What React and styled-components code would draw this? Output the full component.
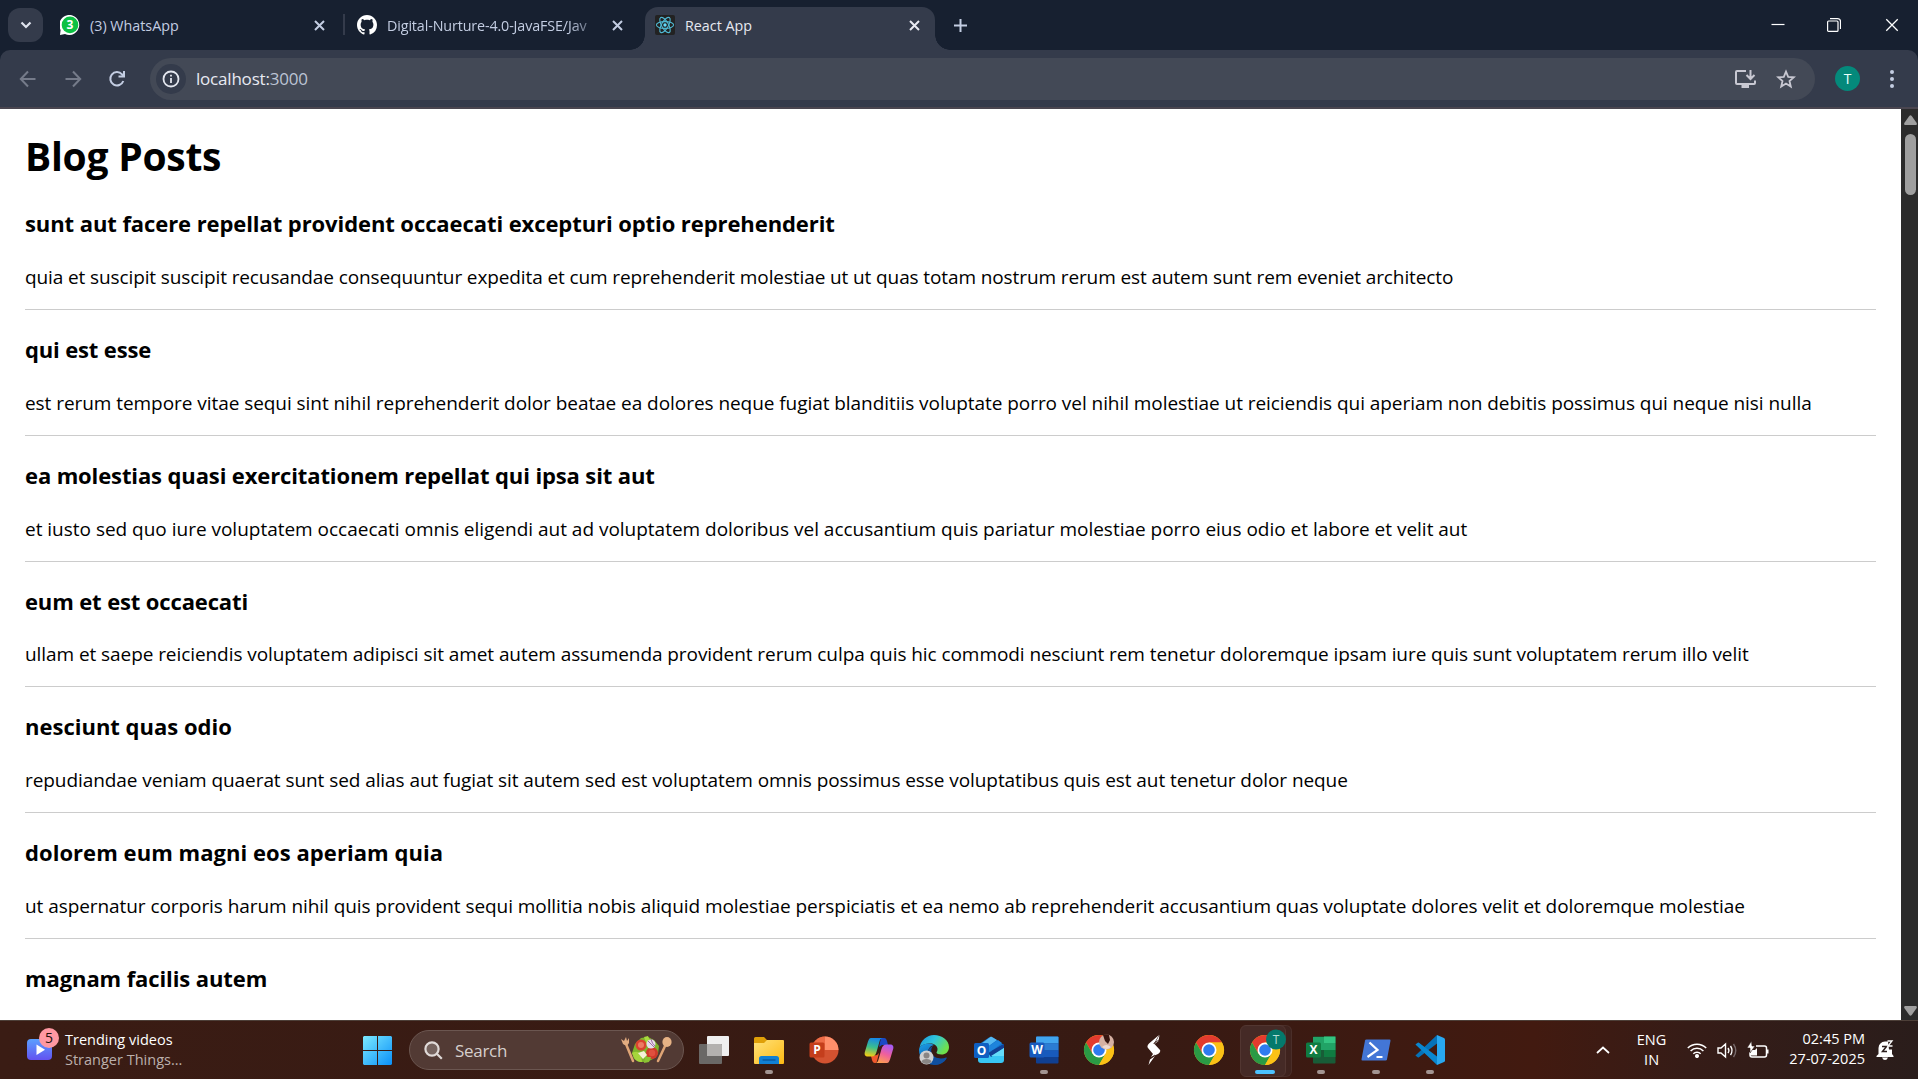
import React from "react";
import styled, { createGlobalStyle } from "styled-components";

const Global = createGlobalStyle`
  * { box-sizing: border-box; }
  html, body { margin: 0; overflow: hidden; background: #fff; }
  body { font-family: "Open Sans", "Noto Sans", sans-serif; }
`;

const Screen = styled.div`
  width: 1918px;
  height: 1079px;
  display: flex;
  flex-direction: column;
  overflow: hidden;
`;

/* ---------- browser chrome ---------- */
const TabStrip = styled.header`
  height: 50px;
  flex: none;
  display: flex;
  align-items: flex-end;
  background: #172030;
  padding-left: 8px;
  font-size: 14.3px;
`;
const TabSearch = styled.div`
  width: 35px;
  height: 34px;
  margin-bottom: 8px;
  border-radius: 12px;
  background: #343b4b;
  display: grid;
  place-items: center;
`;
const Tab = styled.div`
  position: relative;
  width: ${(p) => p.$w}px;
  height: 43px;
  margin-left: ${(p) => p.$ml || 0}px;
  padding: 0 ${(p) => p.$pr || 13}px 0 10px;
  display: flex;
  align-items: center;
  color: ${(p) => (p.$active ? "#e6e8f0" : "#c3cde2")};
  background: ${(p) => (p.$active ? "#343b4b" : "transparent")};
  border-radius: 13px 13px 0 0;
  svg { display: block; flex: none; margin-top: -7px; }
  &::before, &::after {
    content: "";
    display: ${(p) => (p.$active ? "block" : "none")};
    position: absolute;
    bottom: 0;
    width: 15px;
    height: 15px;
  }
  &::before { left: -15px; background: radial-gradient(circle at 0 0, transparent 14.5px, #343b4b 15px); }
  &::after { right: -15px; background: radial-gradient(circle at 100% 0, transparent 14.5px, #343b4b 15px); }
`;
const TabTitle = styled.span`
  flex: 1;
  min-width: 0;
  margin: -7px 14px 0 10px;
  white-space: nowrap;
  ${(p) => p.$fade && "letter-spacing: -0.12px; mask-image: linear-gradient(90deg, #000 86%, rgba(0, 0, 0, 0.2) 100%);"}
`;
const TabDivider = styled.i`
  width: 2px;
  height: 21px;
  margin: 0 0 15px 5px;
  background: #343b4b;
`;
const NewTab = styled.div`
  margin-left: 19px;
  height: 34px;
  margin-bottom: 8px;
  display: grid;
  place-items: center;
`;
const WindowButtons = styled.div`
  margin: 0 19px 0 auto;
  height: 50px;
  display: flex;
  align-items: center;
  gap: 43px;
  svg { display: block; margin-top: -1px; }
  svg:nth-child(2) { margin-left: -1px; margin-right: 1px; }
`;
const Toolbar = styled.div`
  background: #172030;
  flex: none;
`;
const ToolbarInner = styled.div`
  height: 59px;
  display: flex;
  align-items: center;
  background: #343b4b;
  border-bottom: 2px solid #4a4650;
  border-radius: 10px 10px 0 0;
  padding: 0 24px 0 18px;
`;
const NavIcons = styled.div`
  display: flex;
  gap: 24.5px;
  width: 132px;
  svg { display: block; }
`;
const Omnibox = styled.div`
  width: 1665px;
  height: 42px;
  border-radius: 21px;
  background: #434956;
  display: flex;
  align-items: center;
  padding: 0 19px 0 6px;
`;
const SiteInfo = styled.div`
  width: 30px;
  height: 30px;
  border-radius: 50%;
  background: #343b4b;
  display: grid;
  place-items: center;
  margin-right: 10px;
`;
const Url = styled.span`
  flex: 1;
  font-size: 17px;
  color: #e8eaf2;
  letter-spacing: -0.2px;
  em { font-style: normal; color: #bcc4d4; }
`;
const OmniActions = styled.div`
  display: flex;
  gap: 20px;
  svg { display: block; }
`;
const Avatar = styled.div`
  width: 25px;
  height: 25px;
  border-radius: 50%;
  background: #04897b;
  color: #e9fffb;
  font: 14px "Open Sans", sans-serif;
  display: grid;
  place-items: center;
  margin-left: 20px;
`;
const Dots = styled.div`
  margin: 0 0 0 auto;
  display: grid;
  gap: 3px;
  i { width: 4px; height: 4px; border-radius: 50%; background: #c3cde2; }
`;

/* ---------- page ---------- */
const Viewport = styled.div`
  height: 911px;
  flex: none;
  display: flex;
  overflow: hidden;
`;
const Page = styled.main`
  flex: 1;
  min-width: 0;
  padding: 19.5px 25px 0;
  color: #000;
  overflow: hidden;
`;
const Heading = styled.h1`
  margin: 0 0 1.7px;
  font-size: 39px;
  line-height: 54px;
  font-weight: 700;
  letter-spacing: -0.25px;
`;
const Post = styled.article`
  height: 125.8px;
  border-bottom: 1.25px solid #ccc;
  display: flex;
  flex-direction: column;
  white-space: nowrap;
`;
const PostTitle = styled.h3`
  margin: 23px 0 0;
  font-size: 22px;
  line-height: 32px;
  font-weight: 700;
  letter-spacing: ${(p) => p.$ls || 0}px;
`;
const PostBody = styled.p`
  margin: 24.8px 0 0;
  font-size: 19px;
  line-height: 27px;
  letter-spacing: ${(p) => p.$ls || 0}px;
`;
const Scrollbar = styled.div`
  width: 17px;
  background: #2b2b2b;
  display: flex;
  flex-direction: column;
  align-items: center;
  padding: 6px 0 4px 1px;
  svg { display: block; }
`;
const Thumb = styled.div`
  width: 11px;
  height: 61px;
  margin: 9px 0 auto;
  border-radius: 6px;
  background: #9f9f9f;
`;

/* ---------- taskbar ---------- */
const Taskbar = styled.footer`
  flex: 1;
  border-top: 1px solid #4d3f38;
  background: linear-gradient(90deg, #3a1c14 0%, #371a13 60%, #421a10 80%, #361c17 88%, #2a1d1b 100%);
  display: flex;
  align-items: center;
  color: #fff;
  font-size: 14.5px;
  line-height: 20px;
  white-space: nowrap;
`;
const Widget = styled.div`
  width: 363px;
  padding-left: 27px;
  display: flex;
  align-items: center;
  gap: 13px;
`;
const WidgetIcon = styled.div`
  position: relative;
  width: 25px;
  height: 21px;
  margin-top: -2px;
  svg { display: block; }
`;
const Badge = styled.b`
  position: absolute;
  left: 12px;
  top: -11px;
  width: 20px;
  height: 20px;
  border-radius: 50%;
  background: #ff98a2;
  color: #22100c;
  font-weight: 400;
  font-size: 14px;
  line-height: 20px;
  text-align: center;
`;
const Lines = styled.div`
  text-align: ${(p) => p.$align || "left"};
  div + div { color: ${(p) => p.$sub || "#fff"}; }
`;
const SearchBox = styled.div`
  width: 275px;
  height: 40px;
  margin: 0 2px 0 17px;
  border-radius: 20px;
  border: 1px solid #6b5650;
  background: #523a34;
  display: flex;
  align-items: center;
  padding: 0 11px 0 14px;
  font-size: 17px;
  color: #d6cfcc;
  svg { display: block; }
  span { flex: 1; margin: 2px 0 0 12px; letter-spacing: -0.3px; }
`;
const Slot = styled.div`
  position: relative;
  width: ${(p) => p.$w || 55}px;
  height: 50px;
  display: grid;
  place-items: center;
  svg { display: block; position: relative; }
  &::before {
    content: "";
    display: ${(p) => (p.$run === "active" ? "block" : "none")};
    position: absolute;
    left: 4px;
    top: 0;
    width: 44px;
    height: 50px;
    border-radius: 6px;
    background: #452a26;
    border: 1px solid #523631;
    box-shadow: 6px 0 0 -1px #3f231e, 6px 0 0 0 #4a2e29;
  }
  &::after {
    content: "";
    display: ${(p) => (p.$run ? "block" : "none")};
    position: absolute;
    bottom: 1px;
    left: calc(50% - ${(p) => (p.$run === "active" ? 10 : 4)}px);
    width: ${(p) => (p.$run === "active" ? 20 : 8)}px;
    height: 4px;
    border-radius: 2px;
    background: ${(p) => (p.$run === "active" ? "#4cc2ff" : "#a39491")};
  }
`;
const Tray = styled.div`
  margin-left: auto;
  padding-right: 24px;
  display: flex;
  align-items: center;
  svg { display: block; }
`;
const Language = styled(Lines)`
  margin: 0 21px 0 27px;
`;
const Clock = styled(Lines)`
  margin-right: 11px;
  position: relative;
  top: -1px;
`;
const Status = styled.div`
  display: flex;
  align-items: center;
  gap: 10px;
  margin-right: 20px;
`;

/* ---------- icons ---------- */
const Cross = ({ s = 11, c = "#c3cde2", w = 2 }) => (
  <svg width={s} height={s} viewBox="0 0 11 11"><path d="M1 1l9 9M10 1l-9 9" stroke={c} strokeWidth={w} /></svg>
);
const WhatsApp = () => (
  <svg width="20" height="20" viewBox="0 0 20 20">
    <path d="M0 20l.6-5A10 10 0 1 1 5 19z" fill="#fff" />
    <circle cx="10" cy="9.900" r="8.300" fill="#0cc143" />
    <text x="10" y="14.300" textAnchor="middle" fontFamily="Open Sans" fontWeight="700" fontSize="12" fill="#fff">3</text>
  </svg>
);
const GitHub = () => (
  <svg width="20" height="20" viewBox="0 0 16 16"><path fill="#fff" d="M8 0C3.580 0 0 3.580 0 8c0 3.540 2.290 6.530 5.470 7.590.4.070.55-.17.55-.38 0-.19-.01-.82-.01-1.490-2.010.37-2.530-.49-2.690-.94-.09-.23-.48-.94-.82-1.130-.28-.15-.68-.52-.01-.53.63-.01 1.080.58 1.230.82.72 1.210 1.870.87 2.330.66.07-.52.28-.87.51-1.070-1.780-.2-3.640-.89-3.640-3.950 0-.87.31-1.590.82-2.150-.08-.2-.36-1.020.08-2.120 0 0 .67-.21 2.200.82.64-.18 1.320-.27 2-.27s1.360.09 2 .27c1.530-1.040 2.200-.82 2.200-.82.44 1.100.16 1.920.08 2.120.51.56.82 1.270.82 2.150 0 3.070-1.870 3.750-3.650 3.950.29.25.54.73.54 1.480 0 1.070-.01 1.930-.01 2.200 0 .21.15.46.55.38A8.010 8.010 0 0 0 16 8c0-4.420-3.580-8-8-8z" /></svg>
);
const ReactLogo = () => (
  <svg width="20" height="20" viewBox="0 0 20 20">
    <rect width="20" height="20" rx="2" fill="#222" />
    <g fill="none" stroke="#4fb8d3" strokeWidth="1.1">
      {[0, 60, 120].map((r) => <ellipse key={r} cx="10" cy="10" rx="8.600" ry="3.400" transform={`rotate(${r} 10 10)`} />)}
    </g>
    <circle cx="10" cy="10" r="1.700" fill="#61dafb" />
  </svg>
);
const TaskView = () => (
  <svg width="30" height="28" viewBox="0 0 30 28">
    <rect x="8" y="0" width="22" height="20" rx="1" fill="#efefef" />
    <rect x="0" y="8" width="23" height="20" rx="1" fill="#6a6866" />
    <path d="M8 8h14a1 1 0 0 1 1 1v11H8z" fill="#b3b1af" />
  </svg>
);
const Explorer = () => (
  <svg width="30" height="27" viewBox="0 0 30 27">
    <defs><linearGradient id="fo" x2="1" y2="1"><stop stopColor="#ffe27a" /><stop offset="1" stopColor="#fdb913" /></linearGradient></defs>
    <path d="M0 1.500A1.500 1.500 0 0 1 1.500 0H10l3 3v5H0z" fill="#e0a008" />
    <path d="M0 6h10l3-3h16a1 1 0 0 1 1 1v22a1 1 0 0 1-1 1H1a1 1 0 0 1-1-1z" fill="url(#fo)" />
    <path d="M5 27v-5.500A2.500 2.500 0 0 1 7.500 19h15a2.500 2.500 0 0 1 2.500 2.500V27z" fill="#1180d4" />
    <path d="M8.500 23h13" stroke="#0a4f94" strokeWidth="1.200" />
  </svg>
);
const Letter = ({ x, y, fill, t, s = 15 }) => (
  <>
    <rect x={x} y={y} width={s} height={s} rx="1.500" fill={fill} />
    <text x={x + s / 2} y={y + s / 2 + 4.2} textAnchor="middle" fontFamily="Open Sans" fontWeight="700" fontSize="12" fill="#fff">{t}</text>
  </>
);
const PowerPoint = () => (
  <svg width="30" height="28" viewBox="0 0 30 28">
    <circle cx="16" cy="14" r="13.500" fill="#d35230" />
    <path d="M16 .5a13.500 13.500 0 0 0-13.500 13.500H16z" fill="#ed6c47" /><path d="M16 .5V14h13.500A13.500 13.500 0 0 0 16 .5z" fill="#ff8f6b" />
    <Letter x={0.5} y={6.5} fill="#c43e1c" t="P" />
  </svg>
);
const Copilot = () => (
  <svg width="30" height="27" viewBox="0 0 30 27">
    <defs>
      <linearGradient id="ca" x1=".5" x2=".3" y2="1"><stop stopColor="#1687e8" /><stop offset=".5" stopColor="#3cbf8c" /><stop offset="1" stopColor="#f5cc12" /></linearGradient>
      <linearGradient id="cb" x1=".7" x2=".3" y2="1"><stop stopColor="#a65bf5" /><stop offset=".5" stopColor="#ef5f9d" /><stop offset="1" stopColor="#ffa04f" /></linearGradient>
    </defs>
    <path d="M17 1h3c2 0 2.500 1.500 3 3l1 4h-6l-3 2z" fill="#1a49c4" />
    <path d="M7 19l6-1 2-2-2 8c-.5 1.500-1 2-2 2-2 0-2.500-1.500-3-3z" fill="#f0582c" />
    <path d="M7 1h12c-2 0-3 1.500-3.500 3.500L12.500 15c-1 3-2 4.500-5 4.500H4c-3 0-4-2-3-5L4 4.500C5 2 5.500 1 7 1z" fill="url(#ca)" />
    <path d="M23 26H11c2 0 3-1.500 3.500-3.500L17.500 12c1-3 2-4.500 5-4.500H26c3 0 4 2 3 5l-3 10c-1 2.500-1.500 3.500-3 3.500z" fill="url(#cb)" />
  </svg>
);
const Edge = () => (
  <svg width="30" height="30" viewBox="0 0 30 30">
    <defs>
      <linearGradient id="ea" y2=".5"><stop stopColor="#1b93dd" /><stop offset=".5" stopColor="#2fc5dc" /><stop offset="1" stopColor="#6fe04c" /></linearGradient>
      <linearGradient id="eb" x2=".6" y2="1"><stop stopColor="#1ba0e8" /><stop offset="1" stopColor="#0c4a9c" /></linearGradient>
    </defs>
    <path d="M.5 13A15 15 0 0 1 15 0c8 0 15 5 15 12 0 5-3.500 7.500-7.500 7.500-3 0-5-1-5-2 0-.8 1-1 1-3.500 0-3-3-5.500-7-5.500C6 8.500 2 10 .5 13z" fill="url(#ea)" />
    <path d="M0 15c0-4 5-6.500 10-6.500 2 0 4 .8 5 1.500-4 1-6 4-6 7 0 6 6 9 11 9 3 0 5-1 7.500-2.500C25 27.500 20 30 15 30A15 15 0 0 1 0 15z" fill="url(#eb)" />
    <path d="M14 11c-3 3-2 9 2 11 4 2 8 1.500 11 .5.8-.3 1 .3.500 1C25 27.500 21 29.500 18 29.800 12 28 8 23 9 17c.5-3 2-5 5-6z" fill="#104f9f" />
    <circle cx="7.500" cy="22.500" r="7" fill="#d0d0d0" /><circle cx="7.500" cy="20.500" r="3" fill="#8a8684" /><path d="M2.500 27c0-4 10-4 10 0a7 7 0 0 1-10 0z" fill="#8a8684" />
  </svg>
);
const Outlook = () => (
  <svg width="30" height="28" viewBox="0 0 30 28">
    <path d="M4 9L15 1.500Q17 .3 19 1.500L30 9v10H4z" fill="#1272c9" />
    <path d="M7 8l10-7.500 6 3.500-11 8z" fill="#55b9f2" />
    <path d="M12 12l12-8 4 3-13 10z" fill="#1e84dc" /><path d="M14 17L30 8v4L17 21z" fill="#123f93" />
    <path d="M4 20l26-9v13a3 3 0 0 1-3 3H7a3 3 0 0 1-3-3z" fill="#38c6f4" /><path d="M14 17L30 8v4L17 21z" fill="#123f93" /><path d="M17 20l13-8v8z" fill="#64dcfa" />
    <Letter x={0} y={7} fill="#0f5fc2" t="O" />
  </svg>
);
const Word = () => (
  <svg width="30" height="28" viewBox="0 0 30 28">
    <rect x="7" y=".5" width="22.500" height="27" rx="1" fill="#103f91" /><path d="M7 1.500a1 1 0 0 1 1-1h20.500a1 1 0 0 1 1 1v6H7z" fill="#41a5ee" />
    <path d="M7 7.500h22.500v7H7z" fill="#2b7cd3" /><path d="M7 14.500h22.500v6.500H7z" fill="#185abd" />
    <Letter x={0.5} y={6.5} fill="#185abd" t="W" />
  </svg>
);
const Excel = () => (
  <svg width="30" height="28" viewBox="0 0 30 28">
    <rect x="7" y=".5" width="22.500" height="27" rx="1" fill="#185c37" /><path d="M7 1h11v13H7z" fill="#21a366" /><path d="M18 .5h11.500V7H18z" fill="#33c481" />
    <path d="M18 7h11.500v7H18z" fill="#21a366" /><path d="M18 14h11.500v7H18z" fill="#107c41" />
    <Letter x={0} y={6.5} fill="#107c41" t="X" />
  </svg>
);
const Chrome = ({ badge }) => (
  <svg width="30" height="30" viewBox="0 0 30 30" overflow="visible">
    <circle cx="15" cy="15" r="15" fill="#fbc116" />
    <path d="M2 7.500A15 15 0 0 1 28 7.500H15L8.500 18.700z" fill="#e33b2e" />
    <path d="M2 7.500A15 15 0 0 0 15 30l6.500-11.200H8.500z" fill="#2a9a45" />
    <path d="M15 7.500h13A15 15 0 0 1 15 30l6.500-11.200z" fill="#fbc116" />
    <circle cx="15" cy="15" r="7.500" fill="#fff" /><circle cx="15" cy="15" r="5.800" fill="#2f7bf0" />
    {badge === "photo" && <g><circle cx="22.500" cy="7" r="7.500" fill="#d5b0a2" /><path d="M19 0q3.500-1.500 6 0l1 5-2 4-3-3z" fill="#35150f" /><path d="M18 12q4-4 9 0-4 4-9 0z" fill="#ecdad2" /></g>}
    {badge === "T" && <g><circle cx="26" cy="4.500" r="10" fill="#04796c" /><text x="26" y="9" textAnchor="middle" fontFamily="Open Sans" fontSize="12" fill="#b5dcd6">T</text></g>}
  </svg>
);
const Bolt = () => (
  <svg width="14" height="30" viewBox="0 0 14 30">
    <path d="M12 0L2 8.500Q-.5 11 1 13l5 6-2 3 7-3q3-2 2-4L7 8.500z" fill="#fff" /><path d="M12.500 0l-1 6-4 3zM1.500 30L3 24.500l5-3.500z" fill="#fff" />
    <path d="M6.500 8.500l5.500-3.500M2 24l6-4" stroke="#3a1c14" strokeWidth=".8" />
  </svg>
);
const PowerShell = () => (
  <svg width="30" height="22" viewBox="0 0 30 22">
    <path d="M5.500.5h23q1.200 0 1 1.200L26 20.500q-.2 1-1.500 1h-23q-1.200 0-1-1.200L4 1.500q.2-1 1.500-1z" fill="#4376d6" />
    <path d="M8.500 3.500l8 7.500-10 7" fill="none" stroke="#fff" strokeWidth="2.200" /><path d="M15.500 18h6" stroke="#fff" strokeWidth="2" />
  </svg>
);
const VSCode = () => (
  <svg width="30" height="30" viewBox="0 0 30 30">
    <path d="M1.500 19.500L22 0v8.500L4 22.200q-.7.500-1.300 0L.7 20.700q-.6-.6.8-1.200z" fill="#0672b8" />
    <path d="M1.500 10.500L22 30v-8.500L4 7.800q-.7-.5-1.300 0L.7 9.300q-.6.600.8 1.200z" fill="#0a87d0" />
    <path d="M22 0l7 3q1 .5 1 1.500v21q0 1-1 1.500l-7 3z" fill="#29a8f0" />
  </svg>
);
const Salad = () => (
  <svg width="52" height="28" viewBox="0 0 52 28">
    <g stroke="#dfa576" strokeLinecap="round"><path d="M6 8l7 17" strokeWidth="2.500" /><path d="M46 8l-8 17" strokeWidth="2.500" /></g>
    <path d="M1 3l2 5q4 3 6-1l0-5-2 3-1-4-2 4z" fill="#e2ac80" /><ellipse cx="47" cy="6" rx="4.600" ry="5" fill="#e6b285" />
    <path d="M12 17l3-9 6-6 7-1 6 3 5 6-1 8-5 5-6 3-7 0-6-3z" fill="#7fb52b" />
    <circle cx="21" cy="9" r="5.500" fill="#d9432f" /><circle cx="32" cy="17" r="6" fill="#cf3a2a" /><circle cx="21" cy="9" r="3" fill="#ed7a62" /><circle cx="32" cy="17" r="3.300" fill="#e0503e" />
    <path d="M12 17q5-3 9 1l1 8q-7 1-10-9z" fill="#a6d63c" /><path d="M24 1l4-1 2 5-3 4z" fill="#a9da3e" /><circle cx="31" cy="8" r="4.500" fill="#e9dceb" /><path d="M28 5q3 3 6 6M31 3q1 5 4 7" stroke="#9c6aa6" strokeWidth="1" fill="none" />
    <path d="M18 17l6-2 3 4-4 4z" fill="#f5f1d8" /><path d="M25 21l6 0-2 5-5 1z" fill="#8cc334" />
  </svg>
);

const posts = [
  { title: "sunt aut facere repellat provident occaecati excepturi optio reprehenderit", tls: -0.082, ls: -0.11, body: "quia et suscipit suscipit recusandae consequuntur expedita et cum reprehenderit molestiae ut ut quas totam nostrum rerum est autem sunt rem eveniet architecto" },
  { title: "qui est esse", tls: -0.15, ls: -0.055, body: "est rerum tempore vitae sequi sint nihil reprehenderit dolor beatae ea dolores neque fugiat blanditiis voluptate porro vel nihil molestiae ut reiciendis qui aperiam non debitis possimus qui neque nisi nulla" },
  { title: "ea molestias quasi exercitationem repellat qui ipsa sit aut", tls: -0.12, ls: -0.014, body: "et iusto sed quo iure voluptatem occaecati omnis eligendi aut ad voluptatem doloribus vel accusantium quis pariatur molestiae porro eius odio et labore et velit aut" },
  { title: "eum et est occaecati", tls: -0.13, ls: -0.07, body: "ullam et saepe reiciendis voluptatem adipisci sit amet autem assumenda provident rerum culpa quis hic commodi nesciunt rem tenetur doloremque ipsam iure quis sunt voluptatem rerum illo velit" },
  { title: "nesciunt quas odio", tls: 0, ls: -0.071, body: "repudiandae veniam quaerat sunt sed alias aut fugiat sit autem sed est voluptatem omnis possimus esse voluptatibus quis est aut tenetur dolor neque" },
  { title: "dolorem eum magni eos aperiam quia", tls: 0.05, ls: -0.069, body: "ut aspernatur corporis harum nihil quis provident sequi mollitia nobis aliquid molestiae perspiciatis et ea nemo ab reprehenderit accusantium quas voluptate dolores velit et doloremque molestiae" },
  { title: "magnam facilis autem", tls: -0.1 },
];

export default function App() {
  return (
    <Screen>
      <Global />
      <TabStrip>
        <TabSearch><svg width="12" height="8" viewBox="0 0 12 8"><path d="M1.500 1.500L6 6l4.500-4.500" fill="none" stroke="#dfe3ee" strokeWidth="2.200" /></svg></TabSearch>
        <Tab $w={288} $ml={7}><WhatsApp /><TabTitle>(3) WhatsApp</TabTitle><Cross /></Tab>
        <TabDivider />
        <Tab $w={298} $ml={2} $pr={22}><GitHub /><TabTitle $fade>Digital-Nurture-4.0-JavaFSE/Jav</TabTitle><Cross /></Tab>
        <Tab $w={290} $pr={15} $active><ReactLogo /><TabTitle>React App</TabTitle><Cross c="#e8eaf2" /></Tab>
        <NewTab><svg width="13" height="13" viewBox="0 0 13 13"><path d="M6.500 0v13M0 6.500h13" stroke="#c3cde2" strokeWidth="2" /></svg></NewTab>
        <WindowButtons>
          <svg width="14" height="14" viewBox="0 0 14 14"><path d="M.5 6.500h13" stroke="#fff" strokeWidth="1.200" /></svg>
          <svg width="14" height="14" viewBox="0 0 14 14" fill="none" stroke="#fff" strokeWidth="1.200"><rect x=".6" y="3" width="10.400" height="10.400" rx="1" /><path d="M3 .6h7.500a3 3 0 0 1 3 3V11" /></svg>
          <Cross s={14} c="#fff" w={1} />
        </WindowButtons>
      </TabStrip>
      <Toolbar>
        <ToolbarInner>
          <NavIcons>
            <svg width="20" height="20" viewBox="0 0 20 20" fill="none" stroke="#757b8a" strokeWidth="2"><path d="M17.500 10H3.500M10 2.500L2.800 10l7.200 7.500" /></svg>
            <svg width="20" height="20" viewBox="0 0 20 20" fill="none" stroke="#757b8a" strokeWidth="2"><path d="M2.500 10h14M10 2.500l7.200 7.500-7.200 7.500" /></svg>
            <svg width="20" height="20" viewBox="0 0 20 20" fill="none" stroke="#c3cde2" strokeWidth="2"><path d="M16.300 12A6.700 6.700 0 1 1 15 5.300l2 2M17 2v5.500h-5.500" /></svg>
          </NavIcons>
          <Omnibox>
            <SiteInfo><svg width="18" height="18" viewBox="0 0 18 18"><circle cx="9" cy="9" r="7.500" fill="none" stroke="#e3e6ee" strokeWidth="1.800" /><path d="M9 8v5M9 4.800v1.800" stroke="#e3e6ee" strokeWidth="1.800" /></svg></SiteInfo>
            <Url>localhost:<em>3000</em></Url>
            <OmniActions>
              <svg width="22" height="20" viewBox="0 0 22 20" fill="none" stroke="#c8c8d2" strokeWidth="2"><path d="M12 2H3Q2 2 2 3v11q0 1 1 1h17q1 0 1-1v-2.500M16.500 1v8.500M12.500 6l4 4 4-4" /><path d="M7.500 17.500h7.500" strokeWidth="3" /></svg>
              <svg width="20" height="20" viewBox="0 0 20 20" fill="none" stroke="#c8c8d2" strokeWidth="1.800"><path d="M10 2.600l2.200 5.200 5.600.5-4.300 3.700 1.300 5.500-4.800-2.900-4.800 2.900 1.300-5.500L2.200 8.300l5.600-.5z" /></svg>
            </OmniActions>
          </Omnibox>
          <Avatar>T</Avatar>
          <Dots><i /><i /><i /></Dots>
        </ToolbarInner>
      </Toolbar>
      <Viewport>
        <Page>
          <Heading>Blog Posts</Heading>
          {posts.map((p) => (
            <Post key={p.title}>
              <PostTitle $ls={p.tls}>{p.title}</PostTitle>
              {p.body && <PostBody $ls={p.ls}>{p.body}</PostBody>}
            </Post>
          ))}
        </Page>
        <Scrollbar>
          <svg width="13" height="10" viewBox="0 0 13 10"><path d="M5.300 1Q6.500-.5 7.700 1L12.700 8q.5 1.700-.7 2H1Q-.2 9.700.3 8z" fill="#9f9f9f" /></svg>
          <Thumb />
          <svg width="13" height="10" viewBox="0 0 13 10"><path d="M5.300 9q1.200 1.500 2.400 0L12.700 2q.5-1.700-.7-2H1Q-.2.300.3 2z" fill="#9f9f9f" /></svg>
        </Scrollbar>
      </Viewport>
      <Taskbar>
        <Widget>
          <WidgetIcon>
            <svg width="25" height="21" viewBox="0 0 25 21"><defs><linearGradient id="wv" y2="1" x2="0"><stop stopColor="#5aa0ff" /><stop offset="1" stopColor="#6352f0" /></linearGradient></defs><rect width="25" height="21" rx="4" fill="url(#wv)" /><path d="M9.500 5.500v10.500l8.500-5.200z" fill="#fff" /></svg>
            <Badge>5</Badge>
          </WidgetIcon>
          <Lines $sub="#bcb0ac"><div>Trending videos</div><div>Stranger Things...</div></Lines>
        </Widget>
        <svg width="29" height="29" viewBox="0 0 29 29"><defs><linearGradient id="ws" x2="1" y2="1"><stop stopColor="#7ceaff" /><stop offset="1" stopColor="#0a90f8" /></linearGradient></defs><path d="M1 0h13v14H0V1zM15 0h13l1 1v13H15zM0 15h14v14H1l-1-1zM15 15h14v13l-1 1H15z" fill="url(#ws)" /></svg>
        <SearchBox>
          <svg width="19" height="19" viewBox="0 0 19 19" fill="none" stroke="#e0dad8" strokeWidth="2.200"><circle cx="8" cy="8" r="6.600" fill="#75635e" /><path d="M12.800 12.800l5 5" /></svg>
          <span>Search</span>
          <Salad />
        </SearchBox>
        <Slot><TaskView /></Slot>
        <Slot $run="idle"><Explorer /></Slot>
        <Slot><PowerPoint /></Slot>
        <Slot><Copilot /></Slot>
        <Slot><Edge /></Slot>
        <Slot><Outlook /></Slot>
        <Slot $run="idle"><Word /></Slot>
        <Slot><Chrome badge="photo" /></Slot>
        <Slot><Bolt /></Slot>
        <Slot><Chrome /></Slot>
        <Slot $w={57} $run="active"><Chrome badge="T" /></Slot>
        <Slot $w={56} $run="idle"><Excel /></Slot>
        <Slot $w={54} $run="idle"><PowerShell /></Slot>
        <Slot $w={54} $run="idle"><VSCode /></Slot>
        <Tray>
          <svg width="14" height="8" viewBox="0 0 14 8"><path d="M1 7l6-5.500L13 7" fill="none" stroke="#fff" strokeWidth="1.800" /></svg>
          <Language $align="center"><div>ENG</div><div>IN</div></Language>
          <Status>
            <svg width="20" height="16" viewBox="0 0 20 16" fill="none" stroke="#fff" strokeWidth="1.500"><path d="M.8 6a13 13 0 0 1 18.400 0M3.600 9a9 9 0 0 1 12.800 0M6.300 11.700a5.200 5.200 0 0 1 7.400 0" /><circle cx="10" cy="14" r="1.300" fill="#fff" /></svg>
            <svg width="20" height="17" viewBox="0 0 20 17" fill="none" stroke="#fff" strokeWidth="1.400"><path d="M1 6v5h3l4.500 4V2L4 6zM11 6q1.800 2.500 0 5M13.500 4q3 4.500 0 9" /><path d="M16.500 2q4.500 6.500 0 13" stroke="#77696a" /></svg>
            <svg width="22" height="18" viewBox="0 0 22 18"><path d="M9 5h8.500a2 2 0 0 1 2 2v7a2 2 0 0 1-2 2H5a2 2 0 0 1-2-2v-3" fill="none" stroke="#fff" strokeWidth="1.500" /><path d="M3 9h5l2-2v7.500H3z" fill="#fff" /><path d="M20 8.500h1.500v4H20z" fill="#fff" /><path d="M4.500 0L0 7h3v5l5-7H5z" fill="#fff" stroke="#2f1c19" strokeWidth=".6" /></svg>
          </Status>
          <Clock $align="right"><div>02:45 PM</div><div>27-07-2025</div></Clock>
          <svg width="18" height="20" viewBox="0 0 18 20"><path d="M2.500 14V8Q3 2 9 1.500h3l1 8h3V14l1.500 2v1H.5v-1z" fill="#fff" /><path d="M6 17.500h6q-1 2.500-3 2.500t-3-2.500z" fill="#fff" /><path d="M6 6.500h4.500L6.500 11.500h4.500" fill="none" stroke="#2a1d1b" strokeWidth="1.500" /><path d="M11.500 1h4.500l-4 5h4.500" fill="none" stroke="#fff" strokeWidth="1.300" /></svg>
        </Tray>
      </Taskbar>
    </Screen>
  );
}
